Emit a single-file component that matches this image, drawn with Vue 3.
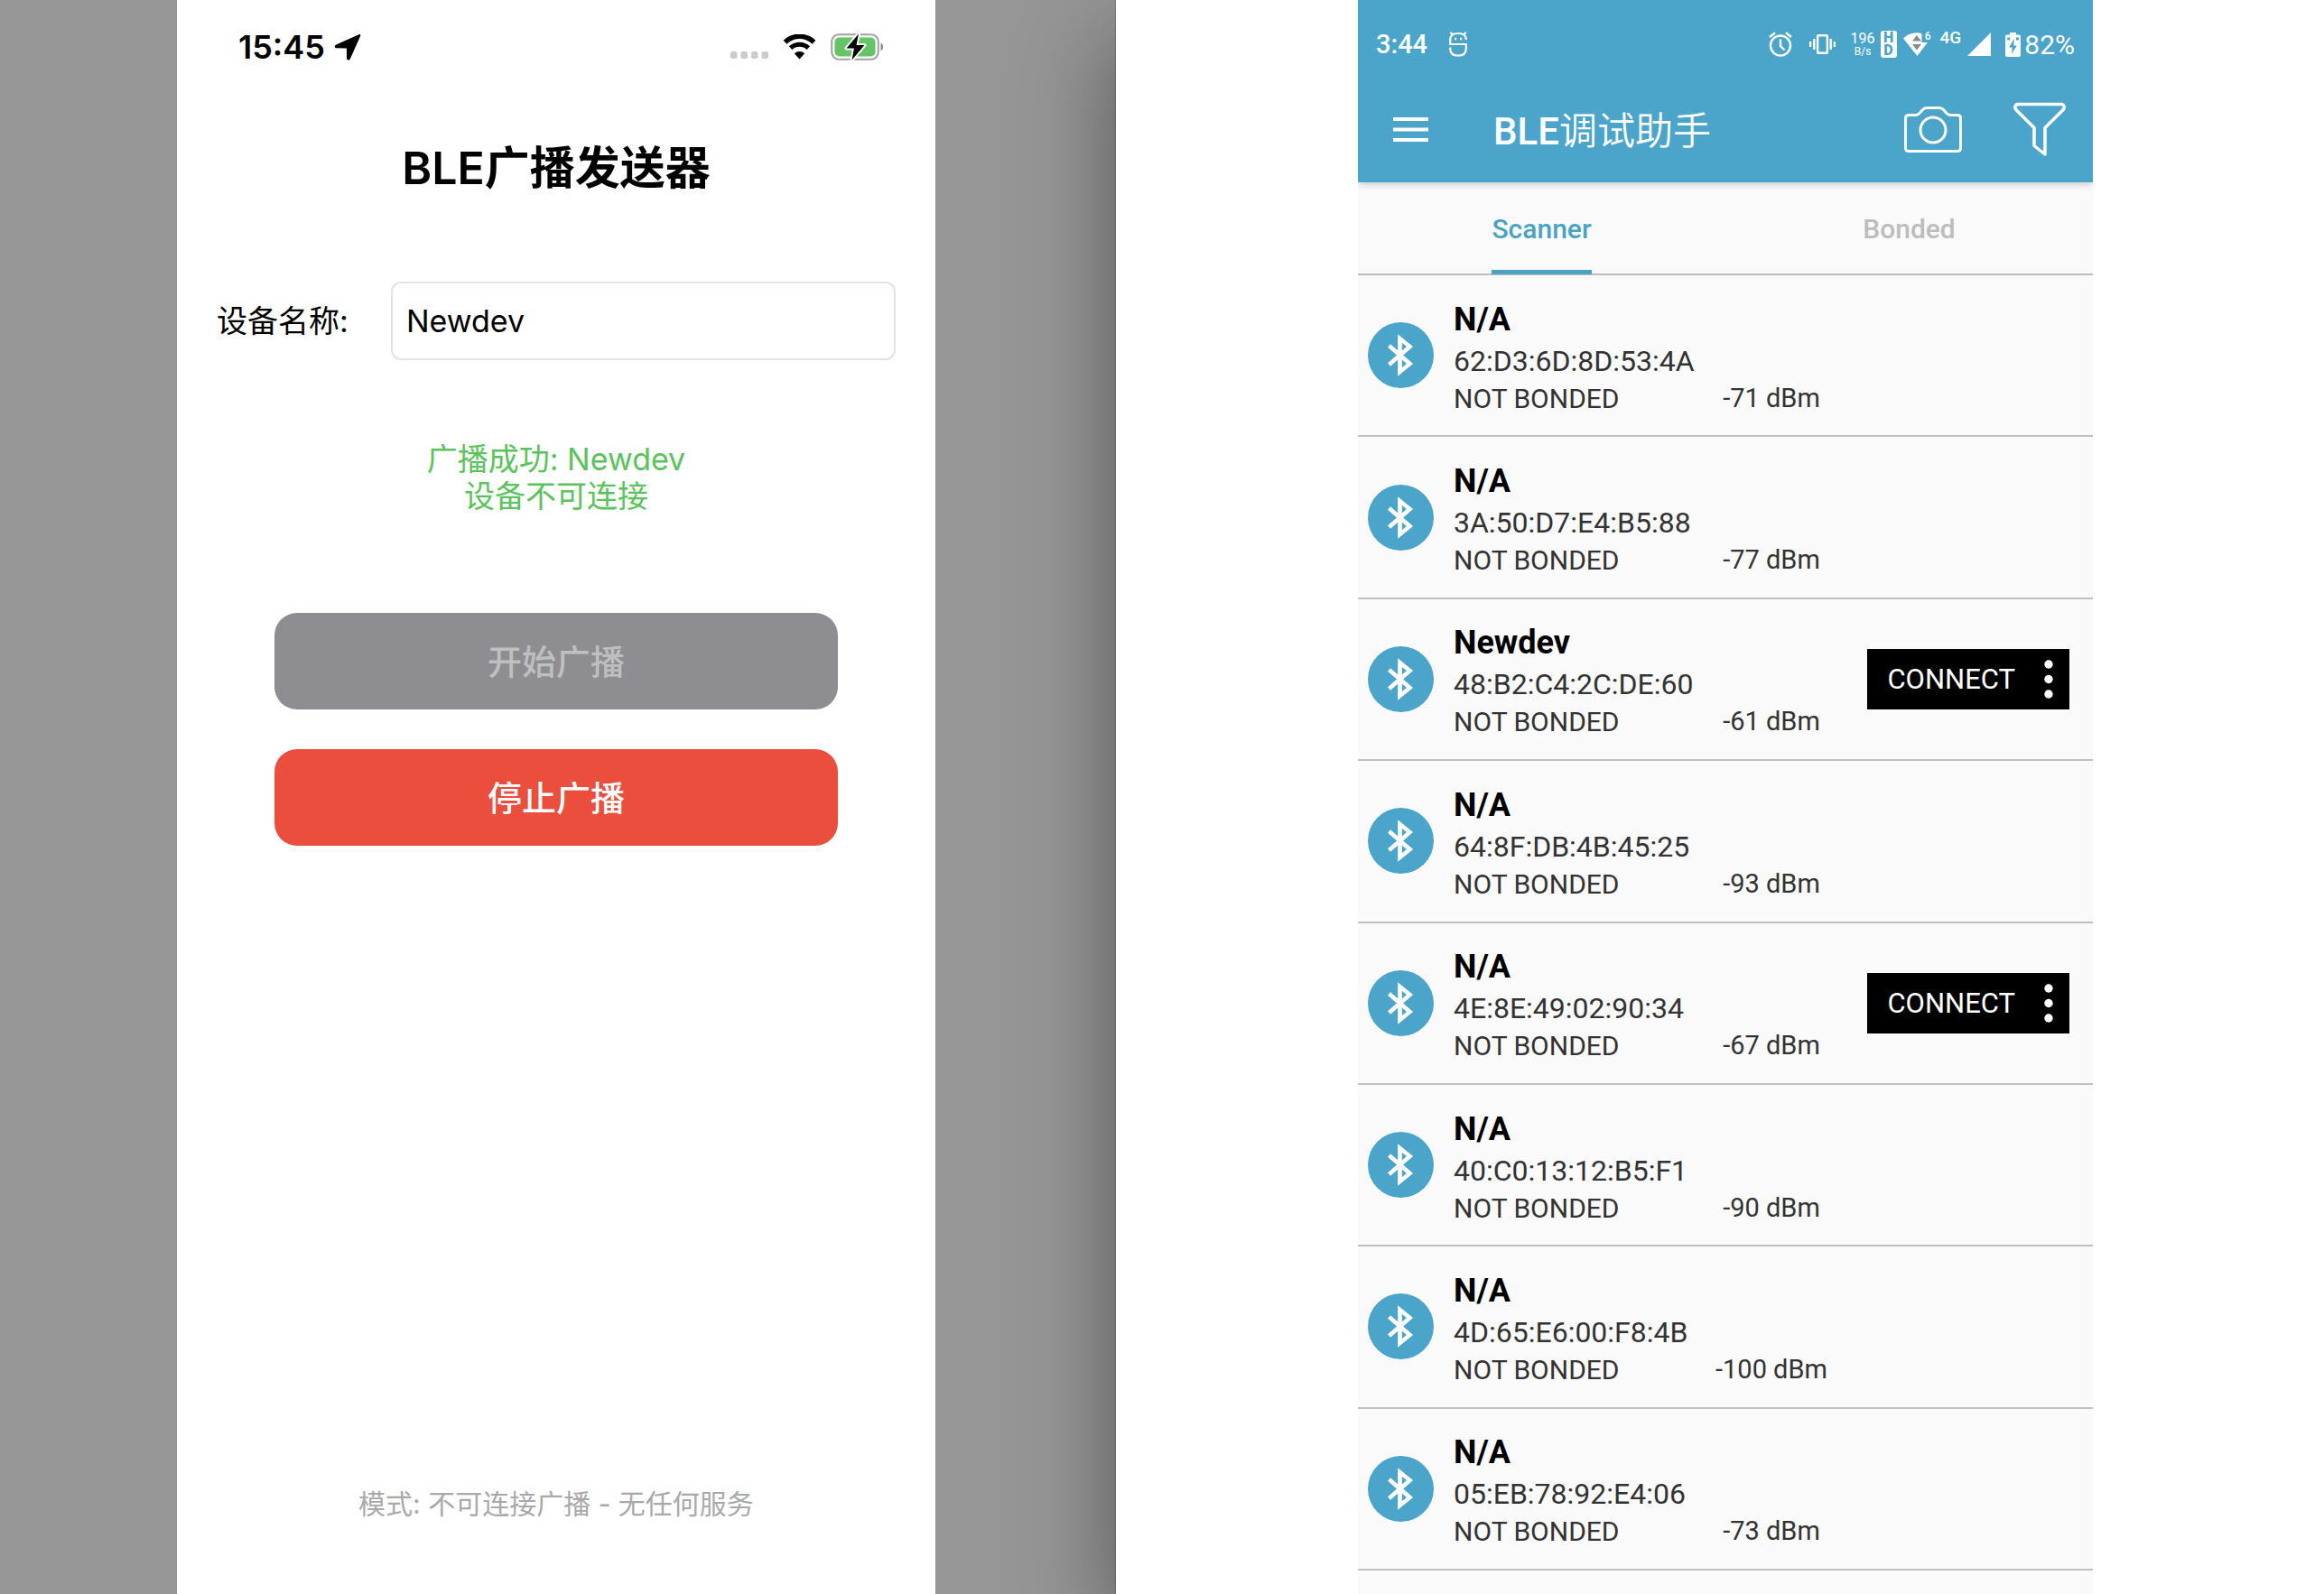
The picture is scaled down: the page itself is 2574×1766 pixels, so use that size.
<script setup>
import { ref } from 'vue'

const deviceName = ref('Newdev')
const activeTab = ref('Scanner')
const tabs = ['Scanner', 'Bonded']

const devices = [
  { name: 'N/A', mac: '62:D3:6D:8D:53:4A', rssi: -71, connectable: false },
  { name: 'N/A', mac: '3A:50:D7:E4:B5:88', rssi: -77, connectable: false },
  { name: 'Newdev', mac: '48:B2:C4:2C:DE:60', rssi: -61, connectable: true },
  { name: 'N/A', mac: '64:8F:DB:4B:45:25', rssi: -93, connectable: false },
  { name: 'N/A', mac: '4E:8E:49:02:90:34', rssi: -67, connectable: true },
  { name: 'N/A', mac: '40:C0:13:12:B5:F1', rssi: -90, connectable: false },
  { name: 'N/A', mac: '4D:65:E6:00:F8:4B', rssi: -100, connectable: false },
  { name: 'N/A', mac: '05:EB:78:92:E4:06', rssi: -73, connectable: false },
]
</script>

<template>
  <div class="stage">
    <section class="pane sender-pane">
      <main class="sender">
        <header class="ios-status">
          <span class="ios-time">15:45</span>
          <svg class="ios-arrow" width="30" height="30" viewBox="0 0 30 30" aria-hidden="true">
            <path d="M27.5 1.2 2.2 12.6c-2.3 1.1-1.600 3.700.6 3.700l10.700.1c.3 0 .4.1.4.4l.1 10.600c0 2.400 2.800 3 3.800.8L29 3.200c.7-1.600-.2-2.500-1.500-2Z" />
          </svg>
          <span class="ios-icons">
            <svg class="dots" width="42" height="8" viewBox="0 0 42 8" aria-hidden="true">
              <rect x="0" width="7.500" height="8" rx="2.500" /><rect x="11.500" width="7.500" height="8" rx="2.500" />
              <rect x="23" width="7.500" height="8" rx="2.500" /><rect x="34.500" width="7.500" height="8" rx="2.500" />
            </svg>
            <svg width="37" height="28" viewBox="0 0 37 28" aria-hidden="true">
              <path d="M2.500 8.800a23 23 0 0 1 32 0" fill="none" stroke="#000" stroke-width="5.500" />
              <path d="M8.600 15.200a14.500 14.500 0 0 1 19.800 0" fill="none" stroke="#000" stroke-width="5" />
              <path d="M12.800 21.300a8.500 8.500 0 0 1 11.400 0L18.500 27.500Z" />
            </svg>
            <svg width="60" height="30" viewBox="0 0 60 30" aria-hidden="true">
              <rect x="1.200" y="1.200" width="51.600" height="27.600" rx="8" fill="none" stroke="#a2a2a2" stroke-width="2" />
              <path d="M55.500 10.500c3.600 1.200 3.600 7.800 0 9Z" fill="#8c8c8c" />
              <rect x="4.500" y="4.500" width="45" height="21" rx="5" fill="#65c466" />
              <path d="M31 .5 17.500 16.500h8.500L23.500 29.500 37.500 13h-9Z" stroke="#fff" stroke-width="4" paint-order="stroke" stroke-linejoin="round" />
            </svg>
          </span>
        </header>

        <h1 class="sender-title">BLE广播发送器</h1>

        <form class="name-row" @submit.prevent>
          <label for="device-name">设备名称:</label>
          <input id="device-name" v-model="deviceName" type="text" autocomplete="off" />
        </form>

        <p class="result">广播成功: {{ deviceName }}<br />设备不可连接</p>

        <div class="actions">
          <button class="action start" type="button" disabled>开始广播</button>
          <button class="action stop" type="button">停止广播</button>
        </div>

        <footer class="mode">模式: 不可连接广播 - 无任何服务</footer>
      </main>
    </section>

    <section class="pane scanner-pane">
      <main class="scanner">
        <header class="bar">
          <div class="droid-status">
            <span class="droid-time">3:44</span>
            <svg class="face" width="20" height="28" viewBox="0 0 20 28" fill="none" stroke="#fff" stroke-width="2.200" aria-hidden="true">
              <path d="M1.200 15V9c0-4.500 3-7 8.800-7s8.800 2.500 8.800 7M1.200 14h17.600v5c0 5-3.300 7.600-8.800 7.600S1.200 24 1.200 19v-1.500M4 4 1.500.8M16 4l2.500-3.200" />
              <path d="M6 8h2.200M12 8h2.200" stroke-width="2.600" />
            </svg>
            <span class="droid-icons">
              <svg class="alarm" width="26" height="28" viewBox="0 0 26 28" fill="none" stroke="#fff" stroke-width="2.400" aria-hidden="true">
                <circle cx="13" cy="15.500" r="11" />
                <path d="M13 8.500v7.500l4.500 4.500M1 6l6-4.800M25 6l-6-4.800" />
              </svg>
              <svg class="vibrate" width="29" height="22" viewBox="0 0 29 22" fill="none" stroke="#fff" stroke-width="2.400" aria-hidden="true">
                <rect x="9.100" y="1.200" width="10.800" height="19.600" rx="1" />
                <path d="M1.100 8v6M5.300 5v12M23.700 5v12M27.900 8v6" />
              </svg>
              <span class="rate"><span>196</span><small>B/s</small></span>
              <span class="hd"><b>H</b><b>D</b></span>
              <span class="wifi">
                <svg width="30" height="28" viewBox="0 0 30 28" aria-hidden="true">
                  <path d="M0 7.500C6 1.500 14 0 20.500 2.200V12H27L15.500 27Z" fill="#fff" />
                  <path d="m15 4 5 6.500H10ZM15 20.500l5-6.500H10Z" fill="#8b8b8b" />
                </svg>
                <span class="wifi-gen">6</span>
              </span>
              <span class="network">4G</span>
              <svg class="signal" width="26" height="26" viewBox="0 0 26 26" aria-hidden="true"><path d="M26 0v26H0Z" fill="#fff" /></svg>
              <svg class="cell" width="17" height="27" viewBox="0 0 17 27" aria-hidden="true">
                <path d="M5 0h7v2.500h3.500q1.500 0 1.500 1.500v21q0 2-2 2H2q-2 0-2-2V4Q0 2.500 1.500 2.500H5Z" fill="#fff" />
                <path d="M10 7 4 16.500h3.800L7 23.500l6-9H9.300ZM2.200 5.500h3v3h-3ZM12 5.500h3v3h-3Z" fill="#4ba5ca" />
              </svg>
              <span class="percent">82%</span>
            </span>
          </div>

          <div class="toolbar">
            <button class="icon-button" type="button" aria-label="Menu">
              <svg width="39" height="27" viewBox="0 0 39 27"><path d="M0 2h39M0 13.500h39M0 25h39" stroke="#fff" stroke-width="4" /></svg>
            </button>
            <h2 class="scanner-title"><span>BLE</span>调试助手</h2>
            <button class="icon-button camera" type="button" aria-label="Camera">
              <svg width="64" height="52" viewBox="0 0 64 52" fill="none" stroke="#fff" stroke-width="3">
                <path d="M5 10.500h7.500c2.500 0 4-1.300 5.300-2.900C20 4.800 21.500 2.500 25 2.500h14c3.500 0 5 2.300 7.200 5.100 1.300 1.600 2.800 2.900 5.300 2.900H59q3.500 0 3.500 3.500v33q0 3.500-3.500 3.500H5q-3.500 0-3.500-3.500V14q0-3.500 3.500-3.500Z" />
                <circle cx="32" cy="27" r="14" />
              </svg>
            </button>
            <button class="icon-button" type="button" aria-label="Filter">
              <svg width="58" height="60" viewBox="0 0 58 60" fill="none" stroke="#fff" stroke-width="3.500" stroke-linejoin="round">
                <path d="M5 2.500h48c3.200 0 4 4 2.200 6L35 28.500V58L23 48.500v-20L2.800 8.500C1 6.500 1.800 2.500 5 2.500Z" />
              </svg>
            </button>
          </div>
        </header>

        <nav class="tabs" role="tablist">
          <button
            v-for="tab in tabs"
            :key="tab"
            type="button"
            role="tab"
            class="tab"
            :class="{ active: tab === activeTab }"
            :aria-selected="tab === activeTab"
            @click="activeTab = tab"
          >
            <span>{{ tab }}</span>
          </button>
        </nav>

        <ul class="devices">
          <li v-for="device in devices" :key="device.mac" class="device">
            <svg class="bluetooth" width="73" height="73" viewBox="0 0 73 73" aria-hidden="true">
              <circle cx="36.500" cy="36.500" r="36.500" fill="#4ba5ca" />
              <path d="M23.500 26 46.500 46 35.500 55V18L46.500 27 23.500 47" fill="none" stroke="#fff" stroke-width="4.600" stroke-miterlimit="8" />
            </svg>
            <div class="info">
              <h3 class="name">{{ device.name }}</h3>
              <div class="mac">{{ device.mac }}</div>
              <div class="state">
                <span class="bond">NOT BONDED</span>
                <span class="rssi">{{ device.rssi }} dBm</span>
              </div>
            </div>
            <div v-if="device.connectable" class="connect-group">
              <button class="connect" type="button">CONNECT</button>
              <button class="more" type="button" aria-label="More options">
                <svg width="10" height="43" viewBox="0 0 10 43" fill="#fff">
                  <circle cx="5" cy="5" r="4.700" /><circle cx="5" cy="21.500" r="4.700" /><circle cx="5" cy="38" r="4.700" />
                </svg>
              </button>
            </div>
          </li>
        </ul>
      </main>
    </section>
  </div>
</template>

<style>
body {
  margin: 0;
}
</style>

<style scoped>
* {
  box-sizing: border-box;
}

button,
input {
  margin: 0;
  padding: 0;
  border: 0;
  background: none;
  font: inherit;
  color: inherit;
}

h1,
h2,
h3,
p,
ul {
  margin: 0;
  padding: 0;
}

svg {
  display: block;
  flex: none;
}

.stage {
  display: grid;
  grid-template-columns: 1236fr 1338fr;
  min-height: 100vh;
  overflow: hidden;
}

.pane {
  display: grid;
  min-width: 0;
}

.sender-pane {
  grid-template-columns: 196fr 840fr 200fr;
  background: #969696;
}

.scanner-pane {
  grid-template-columns: 268fr 814fr 256fr;
  background: #fff;
  box-shadow: 0 40px 100px rgba(0, 0, 0, 0.42), 0 0 2px rgba(0, 0, 0, 0.4);
}

/* Sender app */
.sender {
  position: relative;
  z-index: 1;
  display: flex;
  flex-direction: column;
  grid-column: 2;
  min-width: 0;
  padding: 0 44px;
  background: #fff;
  color: #000;
  font-family: Inter, "Noto Sans CJK SC", sans-serif;
  font-size: 34px;
}

.ios-status {
  display: flex;
  align-items: center;
  height: 104px;
  padding: 0 12px 0 24px;
}

.ios-time {
  font-size: 36px;
  font-weight: 600;
}

.ios-arrow {
  margin-left: 10px;
}

.ios-icons {
  display: flex;
  align-items: center;
  gap: 16px;
  margin-left: auto;
}

.dots {
  align-self: flex-end;
  margin-bottom: 2px;
  fill: #cbcbcb;
}

.sender-title {
  margin-top: 46px;
  font-size: 50px;
  font-weight: 600;
  line-height: 72px;
  text-align: center;
}

.name-row {
  display: flex;
  align-items: center;
  margin-top: 90px;
}

.name-row label {
  width: 193px;
  line-height: 50px;
}

.name-row input {
  flex: 1;
  min-width: 0;
  height: 87px;
  padding: 0 15px;
  border: 2px solid #e4e4e4;
  border-radius: 11px;
}

.result {
  margin-top: 89px;
  color: #5ac35c;
  line-height: 41px;
  text-align: center;
}

.actions {
  display: grid;
  gap: 44px;
  margin-top: 109px;
  padding: 0 64px;
}

.action {
  height: 107px;
  padding-bottom: 4px;
  border-radius: 25px;
  color: #fff;
  font-size: 38px;
  font-weight: 500;
}

.start {
  background: #8e8d92;
  color: #bfbfc1;
}

.stop {
  background: #eb4e3d;
}

.mode {
  margin-top: auto;
  padding-bottom: 79px;
  color: #a9a9a9;
  font-size: 30px;
  line-height: 42px;
  text-align: center;
}

/* Scanner app */
.scanner {
  display: flex;
  flex-direction: column;
  grid-column: 2;
  min-width: 0;
  background: #fafafa;
  font-family: Roboto, "Noto Sans CJK SC", sans-serif;
}

.bar {
  padding-bottom: 12px;
  background: #4ba5ca;
  box-shadow: 0 2px 8px rgba(0, 0, 0, 0.2);
  clip-path: inset(0 0 -20px 0);
  color: #fff;
}

.droid-status {
  display: flex;
  align-items: center;
  height: 98px;
  padding: 0 20px;
}

.droid-time {
  font-size: 29px;
  font-weight: 500;
}

.face {
  margin-left: 24px;
}

.droid-icons {
  display: flex;
  align-items: center;
  margin-left: auto;
}

.vibrate {
  margin-left: 19px;
}

.rate {
  display: flex;
  flex-direction: column;
  align-items: center;
  margin-left: 17px;
  font-size: 16px;
  line-height: 16px;
}

.rate small {
  font-size: 12px;
  line-height: 13px;
}

.hd {
  display: grid;
  gap: 2px;
  width: 18px;
  margin-left: 6px;
  padding: 2px;
  border-radius: 3px;
  background: #fff;
}

.hd b {
  height: 12px;
  color: #4ba5ca;
  font-size: 16px;
  font-weight: 900;
  line-height: 12px;
  text-align: center;
}

.wifi {
  display: flex;
  position: relative;
  width: 33px;
  margin-left: 7px;
}

.wifi-gen {
  position: absolute;
  top: 0;
  right: 2px;
  font-size: 12px;
  font-weight: 500;
  line-height: 10px;
}

.network {
  align-self: flex-start;
  margin-left: 8px;
  font-size: 19px;
  font-weight: 500;
  line-height: 20px;
}

.signal {
  margin-left: 7px;
}

.cell {
  margin-left: 16px;
}

.percent {
  margin-left: 4px;
  font-size: 30px;
}

.toolbar {
  display: flex;
  align-items: center;
  height: 92px;
  padding: 0 30px 2px 39px;
}

.scanner-title {
  margin-left: 72px;
  padding-top: 5px;
  font-size: 42px;
  font-weight: 350;
  line-height: 60px;
}

.scanner-title span {
  font-weight: 500;
}

.camera {
  margin-right: 57px;
  margin-left: auto;
}

.tabs {
  display: grid;
  grid-template-columns: 1fr 1fr;
  height: 103px;
  border-bottom: 2px solid #bdbdbd;
}

.tab {
  display: flex;
  justify-content: center;
  color: #bdbdbd;
  font-size: 30px;
  font-weight: 500;
}

.tab span {
  height: 102px;
  border-bottom: 5px solid transparent;
  line-height: 104px;
}

.tab.active {
  color: #4ba3c3;
}

.tab.active span {
  border-color: #4ba3c3;
}

.devices {
  display: grid;
  flex: 1;
  grid-template-rows: repeat(8, 1fr);
  padding-bottom: 26px;
  list-style: none;
}

.device {
  display: flex;
  align-items: center;
  padding: 0 26px 0 11px;
  border-bottom: 2px solid #c0c0c0;
}

.info {
  margin-left: 22px;
  padding-top: 3px;
  color: #333;
}

.name {
  color: #000;
  font-size: 36px;
  font-weight: 700;
  line-height: 46px;
}

.mac {
  font-size: 32px;
  line-height: 46px;
}

.state {
  display: flex;
  font-size: 30px;
  line-height: 37px;
}

.bond {
  width: 254px;
}

.rssi {
  width: 196px;
  font-size: 29px;
  text-align: center;
}

.connect-group {
  display: flex;
  align-items: center;
  height: 67px;
  margin-left: auto;
  background: #000;
  color: #fff;
}

.connect {
  padding: 0 22px;
  font-size: 31px;
  line-height: 67px;
}

.more {
  display: flex;
  padding: 12px 18px 12px 10px;
}
</style>
